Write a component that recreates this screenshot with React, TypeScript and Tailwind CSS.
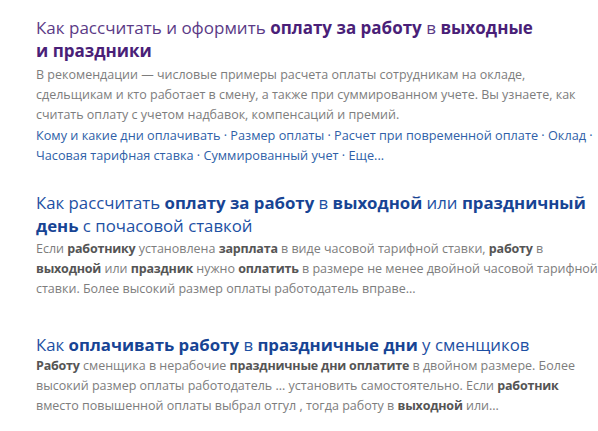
const font = { fontFamily: '"Open Sans", "Liberation Sans", sans-serif' };

type Part = string | { b: string };

function Rich({ parts, boldClass }: { parts: Part[]; boldClass: string }) {
  return (
    <>
      {parts.map((p, i) =>
        typeof p === "string" ? (
          <span key={i}>{p}</span>
        ) : (
          <b key={i} className={boldClass}>
            {p.b}
          </b>
        )
      )}
    </>
  );
}

const links = [
  "Кому и какие дни оплачивать",
  "Размер оплаты",
  "Расчет при повременной оплате",
  "Оклад",
  "Часовая тарифная ставка",
  "Суммированный учет",
];

export default function App() {
  return (
    <div className="min-h-[431px] w-[598px] overflow-hidden bg-white pl-9 pt-4" style={font}>
      <div className="w-[566px]">
        {/* result 1, visited */}
        <div>
          <a className="block text-[17px] leading-[23px] text-[#5b3a86]">
            <Rich
              boldClass="font-bold text-[#4a1f78]"
              parts={[
                "Как рассчитать и оформить ",
                { b: "оплату за работу" },
                " в ",
                { b: "выходные" },
                " ",
                { b: "и\u00a0праздники" },
              ]}
            />
          </a>
          <p className="mt-[3px] text-[12.5px] leading-[20px] text-[#7d7d7d]">
            В рекомендации — числовые примеры расчета оплаты сотрудникам на окладе,
            сдельщикам и кто работает в смену, а также при суммированном учете. Вы
            узнаете, как считать оплату с учетом надбавок, компенсаций и премий.
          </p>
          <p className="text-[12.7px] leading-[20px] text-[#2f5fa8]">
            {links.map((l, i) => (
              <span key={i}>
                <a>{l}</a>
                {" · "}
              </span>
            ))}
            <a>Еще...</a>
          </p>
        </div>

        {/* result 2 */}
        <div className="mt-[26px]">
          <a className="block text-[16.8px] leading-[23px] text-[#1d50a3]">
            <Rich
              boldClass="font-bold text-[#174494]"
              parts={[
                "Как рассчитать ",
                { b: "оплату за работу" },
                " в ",
                { b: "выходной" },
                " или ",
                { b: "праздничный день" },
                " с почасовой ставкой",
              ]}
            />
          </a>
          <p className="mt-[2px] text-[12.5px] leading-[20px] text-[#7d7d7d]">
            <Rich
              boldClass="font-bold tracking-[-0.2px] text-[#555]"
              parts={[
                "Если ",
                { b: "работнику" },
                " установлена ",
                { b: "зарплата" },
                " в виде часовой тарифной ставки, ",
                { b: "работу" },
                " в ",
                { b: "выходной" },
                " или ",
                { b: "праздник" },
                " нужно ",
                { b: "оплатить" },
                " в размере не менее двойной часовой тарифной ставки. Более высокий размер оплаты работодатель вправе...",
              ]}
            />
          </p>
        </div>

        {/* result 3 */}
        <div className="mt-[34px]">
          <a className="block text-[16.8px] leading-[23px] text-[#1d50a3]">
            <Rich
              boldClass="font-bold text-[#174494]"
              parts={[
                "Как ",
                { b: "оплачивать работу" },
                " в ",
                { b: "праздничные дни" },
                " у сменщиков",
              ]}
            />
          </a>
          <p className="text-[12.5px] leading-[20px] text-[#7d7d7d]">
            <Rich
              boldClass="font-bold tracking-[-0.2px] text-[#555]"
              parts={[
                { b: "Работу" },
                " сменщика в нерабочие ",
                { b: "праздничные дни оплатите" },
                " в двойном размере. Более высокий размер оплаты работодатель ... установить самостоятельно. Если ",
                { b: "работник" },
                " вместо повышенной оплаты выбрал отгул , тогда работу в ",
                { b: "выходной" },
                " или...",
              ]}
            />
          </p>
        </div>
      </div>
    </div>
  );
}
